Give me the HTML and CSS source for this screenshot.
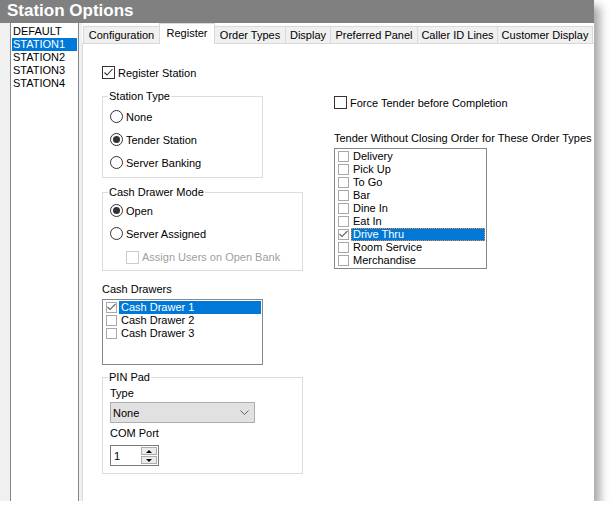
FILE: index.html
```html
<!DOCTYPE html>
<html>
<head>
<meta charset="utf-8">
<link rel="stylesheet" href="styles.css">
</head>
<body>
<div class="window">
  <div class="titlebar">Station Options</div>
  <div class="main">
    <ul class="stations">
      <li>DEFAULT</li>
      <li class="sel">STATION1</li>
      <li>STATION2</li>
      <li>STATION3</li>
      <li>STATION4</li>
    </ul>
    <div class="tabs">
      <div class="tabstrip">
        <div class="tab t-config">Configuration</div>
        <div class="tab t-register active">Register</div>
        <div class="tab t-order">Order Types</div>
        <div class="tab t-display">Display</div>
        <div class="tab t-panel">Preferred Panel</div>
        <div class="tab t-caller">Caller ID Lines</div>
        <div class="tab t-customer">Customer Display</div>
      </div>
      <div class="panel">
        <div class="col-left">
          <div class="check-row">
            <span class="cb"><svg viewBox="0 0 11 11"><polyline points="1.5,5.5 4,8 9.5,2" /></svg></span>
            <span>Register Station</span>
          </div>

          <fieldset class="group group-type">
            <legend>Station Type</legend>
            <div class="radio-row"><span class="rb"></span><span>None</span></div>
            <div class="radio-row"><span class="rb on"></span><span>Tender Station</span></div>
            <div class="radio-row"><span class="rb"></span><span>Server Banking</span></div>
          </fieldset>

          <fieldset class="group group-mode">
            <legend>Cash Drawer Mode</legend>
            <div class="radio-row"><span class="rb on"></span><span>Open</span></div>
            <div class="radio-row"><span class="rb"></span><span>Server Assigned</span></div>
            <div class="check-row sub disabled">
              <span class="cb"></span>
              <span>Assign Users on Open Bank</span>
            </div>
          </fieldset>

          <div class="label drawers-label">Cash Drawers</div>
          <div class="listbox drawers">
            <div class="item sel"><span class="cb-sm"><svg viewBox="0 0 9 9"><polyline points="0.5,4 3,6.5 8.5,1" /></svg></span><span class="txt">Cash Drawer 1</span></div>
            <div class="item"><span class="cb-sm"></span><span class="txt">Cash Drawer 2</span></div>
            <div class="item"><span class="cb-sm"></span><span class="txt">Cash Drawer 3</span></div>
          </div>

          <fieldset class="group group-pin">
            <legend>PIN Pad</legend>
            <div class="label type-label">Type</div>
            <div class="select">
              <span>None</span>
              <svg class="chev" viewBox="0 0 9 5"><polyline points="0.5,0.5 4.5,4.5 8.5,0.5" /></svg>
            </div>
            <div class="label com-label">COM Port</div>
            <div class="spin">
              <span>1</span>
              <span class="spin-btns">
                <span class="spin-btn up"></span>
                <span class="spin-btn down"></span>
              </span>
            </div>
          </fieldset>
        </div>

        <div class="col-right">
          <div class="check-row force">
            <span class="cb"></span>
            <span>Force Tender before Completion</span>
          </div>
          <div class="label tender-label">Tender Without Closing Order for These Order Types</div>
          <div class="listbox types">
            <div class="item"><span class="cb-sm"></span><span class="txt">Delivery</span></div>
            <div class="item"><span class="cb-sm"></span><span class="txt">Pick Up</span></div>
            <div class="item"><span class="cb-sm"></span><span class="txt">To Go</span></div>
            <div class="item"><span class="cb-sm"></span><span class="txt">Bar</span></div>
            <div class="item"><span class="cb-sm"></span><span class="txt">Dine In</span></div>
            <div class="item"><span class="cb-sm"></span><span class="txt">Eat In</span></div>
            <div class="item sel focus"><span class="cb-sm"><svg viewBox="0 0 9 9"><polyline points="0.5,4 3,6.5 8.5,1" /></svg></span><span class="txt">Drive Thru</span></div>
            <div class="item"><span class="cb-sm"></span><span class="txt">Room Service</span></div>
            <div class="item"><span class="cb-sm"></span><span class="txt">Merchandise</span></div>
          </div>
        </div>
      </div>
    </div>
  </div>
</div>
</body>
</html>
```

FILE: styles.css
```css
* { box-sizing: border-box; }

body {
  margin: 0;
  background: #fff;
  font-family: "Liberation Sans", Arial, sans-serif;
  font-size: 11px;
  color: #000;
}

.window {
  width: 594px;
  height: 501px;
  display: flex;
  flex-direction: column;
  background: #f0f0f0;
  box-shadow: 6px 6px 9px rgba(0, 0, 0, 0.35);
}

.titlebar {
  height: 23px;
  flex: none;
  background: #808080;
  color: #fff;
  font-weight: bold;
  font-size: 17px;
  line-height: 22px;
  padding-left: 7px;
}

.main {
  flex: 1;
  display: flex;
  min-height: 0;
}

.stations {
  flex: none;
  list-style: none;
  margin: 0 3px 0 10px;
  padding: 2px 1px 0;
  width: 69px;
  background: #fff;
  border-left: 1px solid #828790;
  border-right: 1px solid #828790;
}

.stations li {
  height: 13px;
  line-height: 13px;
  padding-left: 1px;
  white-space: nowrap;
}

.stations li.sel {
  background: #0078d7;
  color: #fff;
}

.tabs {
  flex: 1;
  min-width: 0;
  display: flex;
  flex-direction: column;
  background: #fff;
}

.tabstrip {
  height: 20px;
  flex: none;
  display: flex;
  align-items: flex-end;
  padding-left: 1px;
}

.tab {
  flex: none;
  height: 17px;
  line-height: 16px;
  text-align: center;
  background: #f0f0f0;
  border: 1px solid #d9d9d9;
  border-bottom: 0;
  margin-right: -1px;
  white-space: nowrap;
}

.t-config { width: 77px; }
.t-register { width: 56px; }
.t-order { width: 72px; }
.t-display { width: 46px; }
.t-panel { width: 88px; }
.t-caller { width: 81px; }
.t-customer { width: 96px; }

.tab.active {
  height: 21px;
  line-height: 19px;
  margin-bottom: -1px;
  background: #fff;
  position: relative;
  z-index: 1;
}

.panel {
  flex: 1;
  display: flex;
  align-items: flex-start;
  border-top: 1px solid #d9d9d9;
  border-left: 1px solid #d9d9d9;
  padding: 22px 0 0 19px;
}

.col-left {
  flex: none;
  width: 201px;
  display: flex;
  flex-direction: column;
}

.col-right {
  flex: none;
  width: 254px;
  margin-left: 31px;
  display: flex;
  flex-direction: column;
}

/* checkbox */
.check-row {
  display: flex;
  align-items: center;
  gap: 3px;
  height: 13px;
  white-space: nowrap;
}

.cb {
  width: 13px;
  height: 13px;
  flex: none;
  border: 1px solid #333;
  background: #fff;
  display: flex;
  align-items: center;
  justify-content: center;
}

.cb svg {
  width: 11px;
  height: 11px;
  fill: none;
  stroke: #333;
  stroke-width: 1.1;
}

.check-row.sub {
  height: 24px;
  padding-left: 16px;
}

.check-row.disabled {
  color: #a0a0a0;
}

.check-row.disabled .cb {
  border-color: #cccccc;
}

.force {
  margin-top: 30px;
}

/* radio */
.radio-row {
  display: flex;
  align-items: center;
  gap: 3px;
  height: 23px;
  white-space: nowrap;
}

.rb {
  width: 13px;
  height: 13px;
  flex: none;
  border: 1px solid #333;
  border-radius: 50%;
  background: #fff;
  display: flex;
  align-items: center;
  justify-content: center;
}

.rb.on::after {
  content: "";
  width: 7px;
  height: 7px;
  border-radius: 50%;
  background: #333;
}

/* groups */
.group {
  margin: 0;
  min-width: 0;
  border: 1px solid #dcdcdc;
  padding: 0 0 0 7px;
}

.group legend {
  padding: 0 1px;
  margin-left: -2px;
  font-size: 11px;
  line-height: 13px;
}

.group-type {
  width: 161px;
  margin-top: 11px;
  padding-top: 2px;
  padding-bottom: 3px;
}

.group-mode {
  width: 201px;
  margin-top: 8px;
  padding-bottom: 1px;
}

.group-pin {
  width: 201px;
  margin-top: 6px;
  padding-top: 3px;
  padding-bottom: 7px;
}

.label {
  height: 13px;
  line-height: 13px;
  white-space: nowrap;
}

.drawers-label { margin-top: 12px; }
.com-label { margin-top: 4px; }
.tender-label { margin-top: 23px; }

/* list boxes */
.listbox {
  border: 1px solid #828790;
  background: #fff;
  padding: 1px;
}

.drawers {
  width: 161px;
  height: 66px;
  margin-top: 3px;
}

.types {
  width: 153px;
  height: 121px;
  margin-top: 3px;
}

.item {
  display: flex;
  align-items: center;
  height: 13px;
}

.cb-sm {
  width: 11px;
  height: 11px;
  flex: none;
  margin: 0 2px;
  border: 1px solid #a8a8a8;
  background: #fff;
  display: flex;
  align-items: center;
  justify-content: center;
}

.cb-sm svg {
  width: 9px;
  height: 9px;
  fill: none;
  stroke: #666;
  stroke-width: 1.1;
}

.item .txt {
  flex: 1;
  height: 13px;
  line-height: 13px;
  padding-left: 2px;
  white-space: nowrap;
}

.item.sel .txt {
  background: #0078d7;
  color: #fff;
}

.item.focus .txt {
  outline: 1px dotted #ff8a2e;
  outline-offset: -1px;
}

/* select */
.select {
  flex: none;
  margin-top: 2px;
  width: 145px;
  height: 21px;
  background: #e1e1e1;
  border: 1px solid #adadad;
  display: flex;
  align-items: center;
  justify-content: space-between;
  padding: 0 5px 0 2px;
}

.chev {
  width: 9px;
  height: 5px;
  fill: none;
  stroke: #606060;
  stroke-width: 1;
}

/* spinner */
.spin {
  flex: none;
  margin-top: 5px;
  width: 49px;
  height: 21px;
  border: 1px solid #7a7a7a;
  background: #fff;
  display: flex;
  align-items: center;
  justify-content: space-between;
  padding: 1px 1px 1px 3px;
}

.spin-btns {
  width: 16px;
  height: 17px;
  display: flex;
  flex-direction: column;
  gap: 1px;
}

.spin-btn {
  flex: 1;
  background: #ececec;
  border: 1px solid #acacac;
  display: flex;
  align-items: center;
  justify-content: center;
}

.spin-btn.up::after {
  content: "";
  border-left: 3px solid transparent;
  border-right: 3px solid transparent;
  border-bottom: 3px solid #000;
}

.spin-btn.down::after {
  content: "";
  border-left: 3px solid transparent;
  border-right: 3px solid transparent;
  border-top: 3px solid #000;
}
```
